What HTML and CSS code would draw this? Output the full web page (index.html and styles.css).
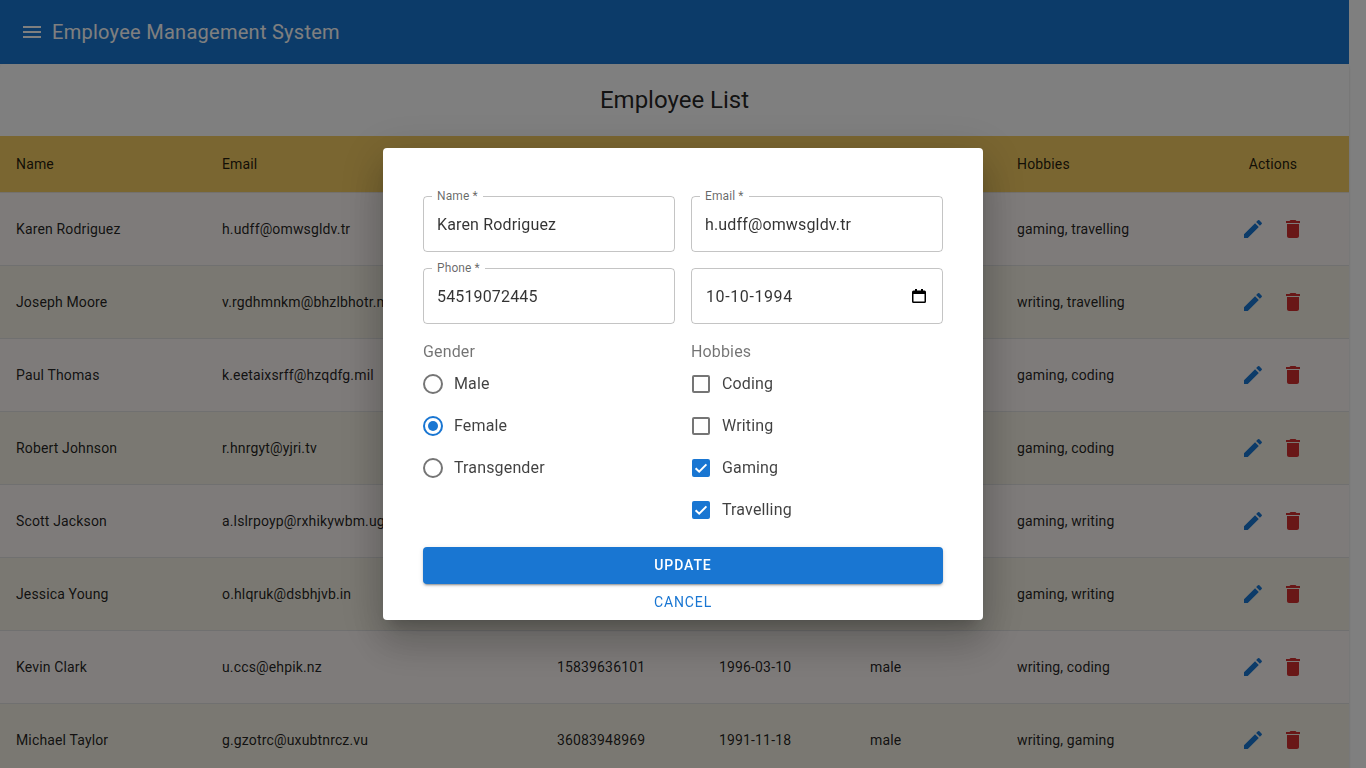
FILE: index.html
```html
<!DOCTYPE html>
<html lang="en">
<head>
  <meta charset="UTF-8" />
  <title>Employee Management System</title>
  <link rel="stylesheet" href="styles.css">
</head>
<body>
  <div class="page">
    <header class="appbar">
      <svg class="menu-icon" viewBox="0 0 24 24"><path d="M3 18h18v-2H3v2zm0-5h18v-2H3v2zm0-7v2h18V6H3z"/></svg>
      <div class="appbar-title">Employee Management System</div>
    </header>

    <main class="paper">
      <h1 class="list-title">Employee List</h1>
      <table class="emp-table">
        <colgroup>
          <col class="c-name"><col class="c-email"><col class="c-phone"><col class="c-dob"><col class="c-gender"><col class="c-hobbies"><col class="c-actions">
        </colgroup>
        <thead>
          <tr><th>Name</th><th>Email</th><th>Phone</th><th>DOB</th><th>Gender</th><th>Hobbies</th><th class="center">Actions</th></tr>
        </thead>
        <tbody>
          <tr><td>Karen Rodriguez</td><td>h.udff@omwsgldv.tr</td><td></td><td></td><td></td><td>gaming, travelling</td><td class="center"><span class="actions"><svg class="ic-edit" viewBox="0 0 24 24"><path d="M3 17.25V21h3.75L17.81 9.94l-3.75-3.75L3 17.25zM20.71 7.04c.39-.39.39-1.02 0-1.41l-2.34-2.34a.9959.9959 0 0 0-1.41 0l-1.83 1.83 3.75 3.75 1.83-1.83z"/></svg><svg class="ic-del" viewBox="0 0 24 24"><path d="M6 19c0 1.1.9 2 2 2h8c1.1 0 2-.9 2-2V7H6v12zM19 4h-3.5l-1-1h-5l-1 1H5v2h14V4z"/></svg></span></td></tr>
          <tr><td>Joseph Moore</td><td>v.rgdhmnkm@bhzlbhotr.mil</td><td></td><td></td><td></td><td>writing, travelling</td><td class="center"><span class="actions"><svg class="ic-edit" viewBox="0 0 24 24"><path d="M3 17.25V21h3.75L17.81 9.94l-3.75-3.75L3 17.25zM20.71 7.04c.39-.39.39-1.02 0-1.41l-2.34-2.34a.9959.9959 0 0 0-1.41 0l-1.83 1.83 3.75 3.75 1.83-1.83z"/></svg><svg class="ic-del" viewBox="0 0 24 24"><path d="M6 19c0 1.1.9 2 2 2h8c1.1 0 2-.9 2-2V7H6v12zM19 4h-3.5l-1-1h-5l-1 1H5v2h14V4z"/></svg></span></td></tr>
          <tr><td>Paul Thomas</td><td>k.eetaixsrff@hzqdfg.mil</td><td></td><td></td><td></td><td>gaming, coding</td><td class="center"><span class="actions"><svg class="ic-edit" viewBox="0 0 24 24"><path d="M3 17.25V21h3.75L17.81 9.94l-3.75-3.75L3 17.25zM20.71 7.04c.39-.39.39-1.02 0-1.41l-2.34-2.34a.9959.9959 0 0 0-1.41 0l-1.83 1.83 3.75 3.75 1.83-1.83z"/></svg><svg class="ic-del" viewBox="0 0 24 24"><path d="M6 19c0 1.1.9 2 2 2h8c1.1 0 2-.9 2-2V7H6v12zM19 4h-3.5l-1-1h-5l-1 1H5v2h14V4z"/></svg></span></td></tr>
          <tr><td>Robert Johnson</td><td>r.hnrgyt@yjri.tv</td><td></td><td></td><td></td><td>gaming, coding</td><td class="center"><span class="actions"><svg class="ic-edit" viewBox="0 0 24 24"><path d="M3 17.25V21h3.75L17.81 9.94l-3.75-3.75L3 17.25zM20.71 7.04c.39-.39.39-1.02 0-1.41l-2.34-2.34a.9959.9959 0 0 0-1.41 0l-1.83 1.83 3.75 3.75 1.83-1.83z"/></svg><svg class="ic-del" viewBox="0 0 24 24"><path d="M6 19c0 1.1.9 2 2 2h8c1.1 0 2-.9 2-2V7H6v12zM19 4h-3.5l-1-1h-5l-1 1H5v2h14V4z"/></svg></span></td></tr>
          <tr><td>Scott Jackson</td><td>a.lslrpoyp@rxhikywbm.ug</td><td></td><td></td><td></td><td>gaming, writing</td><td class="center"><span class="actions"><svg class="ic-edit" viewBox="0 0 24 24"><path d="M3 17.25V21h3.75L17.81 9.94l-3.75-3.75L3 17.25zM20.71 7.04c.39-.39.39-1.02 0-1.41l-2.34-2.34a.9959.9959 0 0 0-1.41 0l-1.83 1.83 3.75 3.75 1.83-1.83z"/></svg><svg class="ic-del" viewBox="0 0 24 24"><path d="M6 19c0 1.1.9 2 2 2h8c1.1 0 2-.9 2-2V7H6v12zM19 4h-3.5l-1-1h-5l-1 1H5v2h14V4z"/></svg></span></td></tr>
          <tr><td>Jessica Young</td><td>o.hlqruk@dsbhjvb.in</td><td></td><td></td><td></td><td>gaming, writing</td><td class="center"><span class="actions"><svg class="ic-edit" viewBox="0 0 24 24"><path d="M3 17.25V21h3.75L17.81 9.94l-3.75-3.75L3 17.25zM20.71 7.04c.39-.39.39-1.02 0-1.41l-2.34-2.34a.9959.9959 0 0 0-1.41 0l-1.83 1.83 3.75 3.75 1.83-1.83z"/></svg><svg class="ic-del" viewBox="0 0 24 24"><path d="M6 19c0 1.1.9 2 2 2h8c1.1 0 2-.9 2-2V7H6v12zM19 4h-3.5l-1-1h-5l-1 1H5v2h14V4z"/></svg></span></td></tr>
          <tr><td>Kevin Clark</td><td>u.ccs@ehpik.nz</td><td>15839636101</td><td>1996-03-10</td><td>male</td><td>writing, coding</td><td class="center"><span class="actions"><svg class="ic-edit" viewBox="0 0 24 24"><path d="M3 17.25V21h3.75L17.81 9.94l-3.75-3.75L3 17.25zM20.71 7.04c.39-.39.39-1.02 0-1.41l-2.34-2.34a.9959.9959 0 0 0-1.41 0l-1.83 1.83 3.75 3.75 1.83-1.83z"/></svg><svg class="ic-del" viewBox="0 0 24 24"><path d="M6 19c0 1.1.9 2 2 2h8c1.1 0 2-.9 2-2V7H6v12zM19 4h-3.5l-1-1h-5l-1 1H5v2h14V4z"/></svg></span></td></tr>
          <tr><td>Michael Taylor</td><td>g.gzotrc@uxubtnrcz.vu</td><td>36083948969</td><td>1991-11-18</td><td>male</td><td>writing, gaming</td><td class="center"><span class="actions"><svg class="ic-edit" viewBox="0 0 24 24"><path d="M3 17.25V21h3.75L17.81 9.94l-3.75-3.75L3 17.25zM20.71 7.04c.39-.39.39-1.02 0-1.41l-2.34-2.34a.9959.9959 0 0 0-1.41 0l-1.83 1.83 3.75 3.75 1.83-1.83z"/></svg><svg class="ic-del" viewBox="0 0 24 24"><path d="M6 19c0 1.1.9 2 2 2h8c1.1 0 2-.9 2-2V7H6v12zM19 4h-3.5l-1-1h-5l-1 1H5v2h14V4z"/></svg></span></td></tr>
        </tbody>
      </table>
    </main>
  </div>

  <div class="backdrop"></div>

  <div class="dialog">
    <div class="form-grid">
      <div class="field"><span class="field-label">Name *</span><span class="field-value">Karen Rodriguez</span></div>
      <div class="field"><span class="field-label">Email *</span><span class="field-value">h.udff@omwsgldv.tr</span></div>
      <div class="field"><span class="field-label">Phone *</span><span class="field-value">54519072445</span></div>
      <div class="field field-date">
        <span class="field-value">10-10-1994</span>
        <svg class="cal-icon" viewBox="0 0 14 14"><path d="M3 0h2v1.5h4V0h2v1.5h1.5A1.5 1.5 0 0 1 14 3v9.5a1.5 1.5 0 0 1-1.5 1.5h-11A1.5 1.5 0 0 1 0 12.5V3a1.5 1.5 0 0 1 1.5-1.5H3V0zM1.5 5v7.5h11V5h-11z"/></svg>
      </div>

      <div class="group">
        <div class="group-label">Gender</div>
        <div class="option"><span class="radio"></span>Male</div>
        <div class="option"><span class="radio on"></span>Female</div>
        <div class="option"><span class="radio"></span>Transgender</div>
      </div>
      <div class="group">
        <div class="group-label">Hobbies</div>
        <div class="option"><span class="check"></span>Coding</div>
        <div class="option"><span class="check"></span>Writing</div>
        <div class="option"><span class="check on"><svg viewBox="0 0 18 18"><path d="M3.6 9.2l3.6 3.5 7.2-7.3" fill="none" stroke="#fff" stroke-width="2"/></svg></span>Gaming</div>
        <div class="option"><span class="check on"><svg viewBox="0 0 18 18"><path d="M3.6 9.2l3.6 3.5 7.2-7.3" fill="none" stroke="#fff" stroke-width="2"/></svg></span>Travelling</div>
      </div>
    </div>
    <button class="btn-update">Update</button>
    <button class="btn-cancel">Cancel</button>
  </div>
</body>
</html>
```

FILE: styles.css
```css
html, body {
  margin: 0;
  height: 100%;
  overflow: hidden;
  background: #fff;
  font-family: Roboto, 'Liberation Sans', Arial, sans-serif;
}
.page {
  width: 1349px;
}
.appbar {
  height: 64px;
  background-color: #1976d2;
  color: #fff;
  display: flex;
  align-items: center;
  padding-left: 20px;
}
.menu-icon {
  width: 24px;
  height: 24px;
  fill: #fff;
  margin-right: 8px;
}
.appbar-title {
  font-size: 20px;
  letter-spacing: 0.27px;
}
.paper {
  position: relative;
  background: #fff;
  box-shadow: 0 2px 1px -1px rgba(0,0,0,.2), 0 1px 1px rgba(0,0,0,.14), 0 1px 3px rgba(0,0,0,.12);
  border-radius: 4px;
  overflow: hidden;
}
.list-title {
  margin: 0;
  height: 72px;
  line-height: 72px;
  font-size: 24px;
  font-weight: 400;
  text-align: center;
  color: rgba(0,0,0,.87);
}
.emp-table {
  width: 1349px;
  table-layout: fixed;
  border-collapse: collapse;
  font-size: 14px;
  letter-spacing: 0.15px;
  color: rgba(0,0,0,.87);
}
.c-name { width: 206px; }
.c-email { width: 335px; }
.c-phone { width: 162px; }
.c-dob { width: 151px; }
.c-gender { width: 147px; }
.c-hobbies { width: 196px; }
.emp-table th {
  height: 56px;
  padding: 0 16px;
  text-align: left;
  font-weight: 400;
  background: #f4cc62;
  border-bottom: 1px solid #e8e2d8;
}
.emp-table td {
  height: 72px;
  padding: 0 16px;
  border-bottom: 1px solid #e0e0e0;
  white-space: nowrap;
}
.emp-table th.center, .emp-table td.center {
  text-align: center;
}
.emp-table tbody tr:nth-child(odd) { background: #fdf7f4; }
.emp-table tbody tr:nth-child(even) { background: #f4f0e4; }
.actions {
  display: inline-flex;
  gap: 16px;
  vertical-align: middle;
}
.actions svg {
  width: 24px;
  height: 24px;
}
.ic-edit { fill: #1976d2; }
.ic-del { fill: #d32f2f; }

.backdrop {
  position: fixed;
  inset: 0;
  background: rgba(0,0,0,.5);
}
.dialog {
  position: fixed;
  left: 383px;
  top: 148px;
  width: 600px;
  height: 472px;
  box-sizing: border-box;
  padding: 48px 40px 0;
  background: #fff;
  border-radius: 4px;
  box-shadow: 0 11px 15px -7px rgba(0,0,0,.2), 0 24px 38px 3px rgba(0,0,0,.14), 0 9px 46px 8px rgba(0,0,0,.12);
}
.form-grid {
  display: grid;
  grid-template-columns: 252px 252px;
  gap: 16px;
}
.field {
  position: relative;
  height: 56px;
  box-sizing: border-box;
  border: 1px solid rgba(0,0,0,.23);
  border-radius: 4px;
  padding: 0 13px;
  display: flex;
  align-items: center;
  justify-content: space-between;
  font-size: 16px;
  letter-spacing: 0.15px;
  color: rgba(0,0,0,.8);
}
.field-label {
  position: absolute;
  left: 8px;
  top: -8px;
  padding: 0 5px;
  background: #fff;
  font-size: 12px;
  line-height: 14px;
  letter-spacing: 0.1px;
  color: rgba(0,0,0,.6);
}
.field-date {
  padding: 0 15px 0 14px;
}
.field-date .field-value {
  letter-spacing: 0.6px;
}
.cal-icon {
  width: 14px;
  height: 14px;
  fill: #000;
  margin-right: 1px;
}
.group-label {
  height: 23px;
  line-height: 23px;
  font-size: 16px;
  letter-spacing: 0.15px;
  color: rgba(0,0,0,.55);
}
.option {
  height: 40px;
  padding-bottom: 2px;
  display: flex;
  align-items: center;
  font-size: 16px;
  letter-spacing: 0.15px;
  color: rgba(0,0,0,.75);
}
.radio {
  width: 20px;
  height: 20px;
  box-sizing: border-box;
  border: 2px solid #757575;
  border-radius: 50%;
  margin: 2px 11px 0 0;
  display: flex;
  align-items: center;
  justify-content: center;
}
.radio.on { border-color: #1976d2; }
.radio.on::after {
  content: '';
  width: 10px;
  height: 10px;
  border-radius: 50%;
  background: #1976d2;
}
.check {
  width: 18px;
  height: 18px;
  box-sizing: border-box;
  border: 2px solid #757575;
  border-radius: 2px;
  margin: 2px 12px 0 1px;
}
.check.on {
  border: 0;
  background: #1976d2;
}
.check svg {
  display: block;
  width: 18px;
  height: 18px;
}
.btn-update, .btn-cancel {
  display: block;
  width: 100%;
  border: 0;
  font-family: inherit;
  font-size: 14px;
  font-weight: 500;
  letter-spacing: 0.9px;
  text-transform: uppercase;
  cursor: pointer;
}
.btn-update {
  margin-top: 16px;
  height: 37px;
  padding: 0 0 2px;
  background: #1976d2;
  color: #fff;
  border-radius: 4px;
  box-shadow: 0 3px 1px -2px rgba(0,0,0,.2), 0 2px 2px rgba(0,0,0,.14), 0 1px 5px rgba(0,0,0,.12);
}
.btn-cancel {
  height: 36px;
  background: none;
  color: #1976d2;
  font-weight: 400;
}
```
